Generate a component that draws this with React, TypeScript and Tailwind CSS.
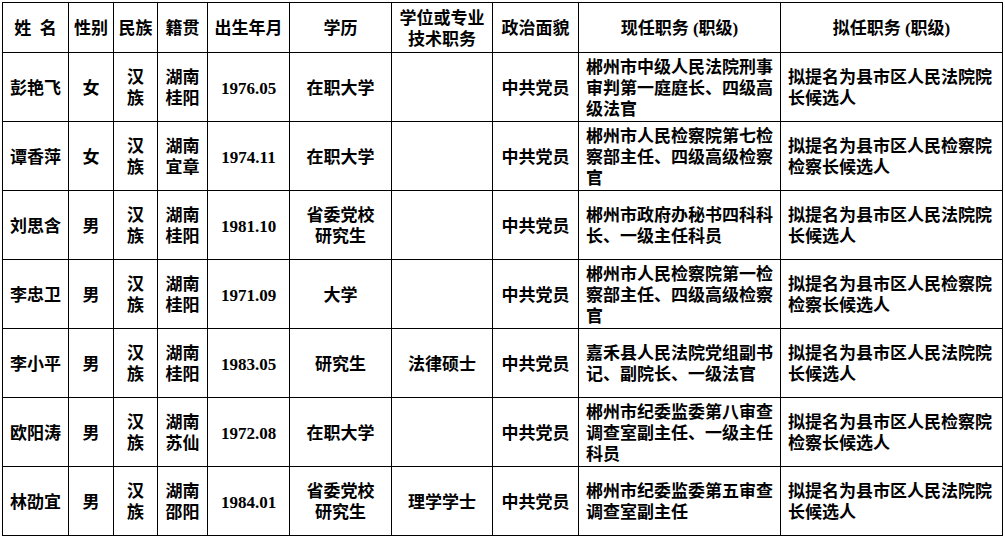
import React from "react";

type Row = {
  name: string;
  sex: string;
  origin: [string, string];
  birth: string;
  edu: string[];
  degree: string;
  party: string;
  current: string[];
  proposed: string[];
};

const rows: Row[] = [
  {
    name: "彭艳飞",
    sex: "女",
    origin: ["湖南", "桂阳"],
    birth: "1976.05",
    edu: ["在职大学"],
    degree: "",
    party: "中共党员",
    current: ["郴州市中级人民法院刑事", "审判第一庭庭长、四级高", "级法官"],
    proposed: ["拟提名为县市区人民法院院", "长候选人"],
  },
  {
    name: "谭香萍",
    sex: "女",
    origin: ["湖南", "宜章"],
    birth: "1974.11",
    edu: ["在职大学"],
    degree: "",
    party: "中共党员",
    current: ["郴州市人民检察院第七检", "察部主任、四级高级检察", "官"],
    proposed: ["拟提名为县市区人民检察院", "检察长候选人"],
  },
  {
    name: "刘思含",
    sex: "男",
    origin: ["湖南", "桂阳"],
    birth: "1981.10",
    edu: ["省委党校", "研究生"],
    degree: "",
    party: "中共党员",
    current: ["郴州市政府办秘书四科科", "长、一级主任科员"],
    proposed: ["拟提名为县市区人民法院院", "长候选人"],
  },
  {
    name: "李忠卫",
    sex: "男",
    origin: ["湖南", "桂阳"],
    birth: "1971.09",
    edu: ["大学"],
    degree: "",
    party: "中共党员",
    current: ["郴州市人民检察院第一检", "察部主任、四级高级检察", "官"],
    proposed: ["拟提名为县市区人民检察院", "检察长候选人"],
  },
  {
    name: "李小平",
    sex: "男",
    origin: ["湖南", "桂阳"],
    birth: "1983.05",
    edu: ["研究生"],
    degree: "法律硕士",
    party: "中共党员",
    current: ["嘉禾县人民法院党组副书", "记、副院长、一级法官"],
    proposed: ["拟提名为县市区人民法院院", "长候选人"],
  },
  {
    name: "欧阳涛",
    sex: "男",
    origin: ["湖南", "苏仙"],
    birth: "1972.08",
    edu: ["在职大学"],
    degree: "",
    party: "中共党员",
    current: ["郴州市纪委监委第八审查", "调查室副主任、一级主任", "科员"],
    proposed: ["拟提名为县市区人民检察院", "检察长候选人"],
  },
  {
    name: "林劭宜",
    sex: "男",
    origin: ["湖南", "邵阳"],
    birth: "1984.01",
    edu: ["省委党校", "研究生"],
    degree: "理学学士",
    party: "中共党员",
    current: ["郴州市纪委监委第五审查", "调查室副主任"],
    proposed: ["拟提名为县市区人民法院院", "长候选人"],
  },
];

const Lines = ({ lines }: { lines: string[] }) => (
  <>
    {lines.map((l, i) => (
      <div key={i}>{l}</div>
    ))}
  </>
);

const th = "border border-black text-center align-middle font-semibold pt-[2px]";
const td = "border border-black align-middle pt-[2px]";

export default function App() {
  return (
    <div className="w-[1005px] h-[540px] bg-white overflow-hidden pt-[2px] pl-[2px]">
      <table
        className="table-fixed border-collapse w-[1000px] text-[17px] leading-[21px] text-black"
        style={{ fontFamily: "'Liberation Serif', 'Noto Sans CJK SC', serif" }}
      >
        <colgroup>
          <col className="w-[66px]" />
          <col className="w-[45px]" />
          <col className="w-[44px]" />
          <col className="w-[50px]" />
          <col className="w-[82px]" />
          <col className="w-[102px]" />
          <col className="w-[101px]" />
          <col className="w-[86px]" />
          <col className="w-[202px]" />
          <col className="w-[222px]" />
        </colgroup>
        <thead>
          <tr className="h-[50px]">
            <th className={th}>姓&nbsp;&nbsp;名</th>
            <th className={th}>性别</th>
            <th className={th}>民族</th>
            <th className={th}>籍贯</th>
            <th className={th}>出生年月</th>
            <th className={th}>学历</th>
            <th className={th}>
              <div>学位或专业</div>
              <div>技术职务</div>
            </th>
            <th className={th}>政治面貌</th>
            <th className={th}>现任职务 (职级)</th>
            <th className={th}>拟任职务 (职级)</th>
          </tr>
        </thead>
        <tbody className="font-semibold">
          {rows.map((r) => (
            <tr key={r.name} className="h-[69px]">
              <td className={`${td} text-center`}>{r.name}</td>
              <td className={`${td} text-center`}>{r.sex}</td>
              <td className={`${td} text-center`}>
                <div>汉</div>
                <div>族</div>
              </td>
              <td className={`${td} text-center`}>
                <Lines lines={r.origin} />
              </td>
              <td className={`${td} text-center font-bold`}>{r.birth}</td>
              <td className={`${td} text-center`}>
                <Lines lines={r.edu} />
              </td>
              <td className={`${td} text-center`}>{r.degree}</td>
              <td className={`${td} text-center`}>{r.party}</td>
              <td className={`${td} pl-[7px] whitespace-nowrap`}>
                <Lines lines={r.current} />
              </td>
              <td className={`${td} pl-[7px] whitespace-nowrap`}>
                <Lines lines={r.proposed} />
              </td>
            </tr>
          ))}
        </tbody>
      </table>
    </div>
  );
}
